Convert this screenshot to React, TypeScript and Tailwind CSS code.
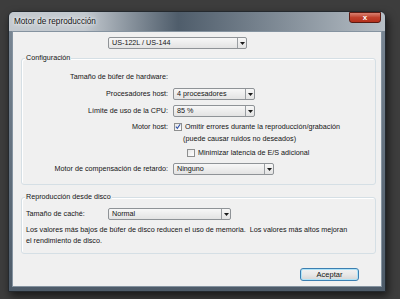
import React from "react";

const font = { fontFamily: '"Liberation Sans", Arial, sans-serif' };

const Combo = ({ value, className }: { value: string; className: string }) => (
  <div
    className={`flex h-[12px] items-stretch rounded-[2px] border border-[#8f9397] bg-gradient-to-b from-[#f7f7f7] to-[#e3e3e3] ${className}`}
  >
    <span className="flex-1 pl-[3px] leading-[10px] text-[#141414]">{value}</span>
    <span className="flex w-[9px] items-center justify-center border-l border-[#9a9ea2]">
      <svg width="5" height="3" viewBox="0 0 5 3">
        <path d="M0 0h5L2.5 3z" fill="#1a1a1a" />
      </svg>
    </span>
  </div>
);

const Check = ({ checked }: { checked?: boolean }) => (
  <span className="flex h-[8px] w-[8px] shrink-0 items-center justify-center border border-[#8e8f8f] bg-gradient-to-br from-[#e6e6e6] to-[#ffffff]">
    {checked && (
      <svg width="7" height="7" viewBox="0 0 7 7">
        <path d="M1 3.6l1.8 2L6 0.8" stroke="#2b4fa8" strokeWidth="1.2" fill="none" />
      </svg>
    )}
  </span>
);

const Row = ({ label, children, className }: { label: string; children?: React.ReactNode; className: string }) => (
  <div className={`flex h-[12px] items-center ${className}`}>
    <span className="w-[147px] shrink-0 pr-[1px] text-right">{label}</span>
    <div className="ml-[4px] flex items-center">{children}</div>
  </div>
);

export default function App() {
  return (
    <div className="h-[299px] w-[400px] overflow-hidden bg-[#3d3d3d] pl-[8px] pt-[11px] text-[7.2px]" style={font}>
      <div className="flex h-[281px] w-[378px] flex-col rounded-t-[6px] border border-[#24292e] bg-gradient-to-b from-[#7c8996] to-[#4d5b69] shadow-[2px_4px_8px_rgba(0,0,0,0.6)]">
        {/* title bar */}
        <div className="flex h-[19px] items-start justify-between rounded-t-[5px] bg-gradient-to-r from-[#c3c9cf] from-[20%] via-[#4f5d6b] via-[45%] to-[#b7bfc6] px-[4px]">
          <span className="mt-[4px] pl-[1px] text-[8.2px] text-[#141414] [text-shadow:0_0_6px_#ffffff,0_0_3px_#ffffff]">
            Motor de reproducción
          </span>
          <div className="flex h-[11px] w-[32px] items-center justify-center rounded-b-[3px] border border-[#5a1a12] bg-gradient-to-b from-[#d88070] via-[#c0402c] to-[#b4301c]">
            <span className="text-[8px] font-bold leading-none text-white">x</span>
          </div>
        </div>

        {/* client */}
        <div className="mx-[3px] mb-[4px] flex flex-1 flex-col border border-[#8593a0] bg-[#f0f0f0] text-[#141414]">
          <Combo value="US-122L / US-144" className="ml-[95px] mt-[5px] w-[139px]" />

          <div className="relative ml-[8px] mt-[9px] flex h-[127px] w-[355px] flex-col rounded-[3px] border border-[#d5dfe5] shadow-[inset_1px_1px_0_#ffffff]">
            <span className="absolute -top-[6px] left-[3px] bg-[#f0f0f0] px-[1px] leading-[10px]">Configuración</span>
            <Row label="Tamaño de búfer de hardware:" className="mt-[12px]" />
            <Row label="Procesadores host:" className="mt-[5px]">
              <Combo value="4 procesadores" className="w-[82px]" />
            </Row>
            <Row label="Límite de uso de la CPU:" className="mt-[5px]">
              <Combo value="85 %" className="w-[82px]" />
            </Row>
            <Row label="Motor host:" className="mt-[4px]">
              <span className="ml-[1px]">
                <Check checked />
              </span>
              <span className="ml-[3px]">Omitir errores durante la reproducción/grabación</span>
            </Row>
            <div className="flex h-[12px] items-center pl-[161px]">(puede causar ruidos no deseados)</div>
            <div className="mt-[2px] flex h-[12px] items-center pl-[165px]">
              <Check />
              <span className="ml-[3px]">Minimizar latencia de E/S adicional</span>
            </div>
            <Row label="Motor de compensación de retardo:" className="mt-[4px]">
              <Combo value="Ninguno" className="w-[101px]" />
            </Row>
          </div>

          <div className="relative ml-[8px] mt-[12px] flex h-[57px] w-[355px] flex-col rounded-[3px] border border-[#d5dfe5] shadow-[inset_1px_1px_0_#ffffff]">
            <span className="absolute -top-[6px] left-[3px] bg-[#f0f0f0] px-[1px] leading-[10px]">Reproducción desde disco</span>
            <div className="mt-[10px] flex h-[12px] items-center pl-[4px]">
              <span className="w-[82px]">Tamaño de caché:</span>
              <Combo value="Normal" className="w-[123px]" />
            </div>
            <p className="mt-[4px] pl-[4px] leading-[11px]">
              Los valores más bajos de búfer de disco reducen el uso de memoria.&nbsp; Los valores más altos mejoran
              <br />
              el rendimiento de disco.
            </p>
          </div>

          <div className="mr-[22px] mt-[14px] flex justify-end">
            <button className="flex h-[13px] w-[59px] items-center justify-center rounded-[3px] border border-[#3c7fb1] bg-gradient-to-b from-[#f2f2f2] via-[#e8e8e8] to-[#d6d6d6] text-[7.5px] text-[#141414] shadow-[inset_0_0_0_1px_#aee3f8]">
              Aceptar
            </button>
          </div>
        </div>
      </div>
    </div>
  );
}
